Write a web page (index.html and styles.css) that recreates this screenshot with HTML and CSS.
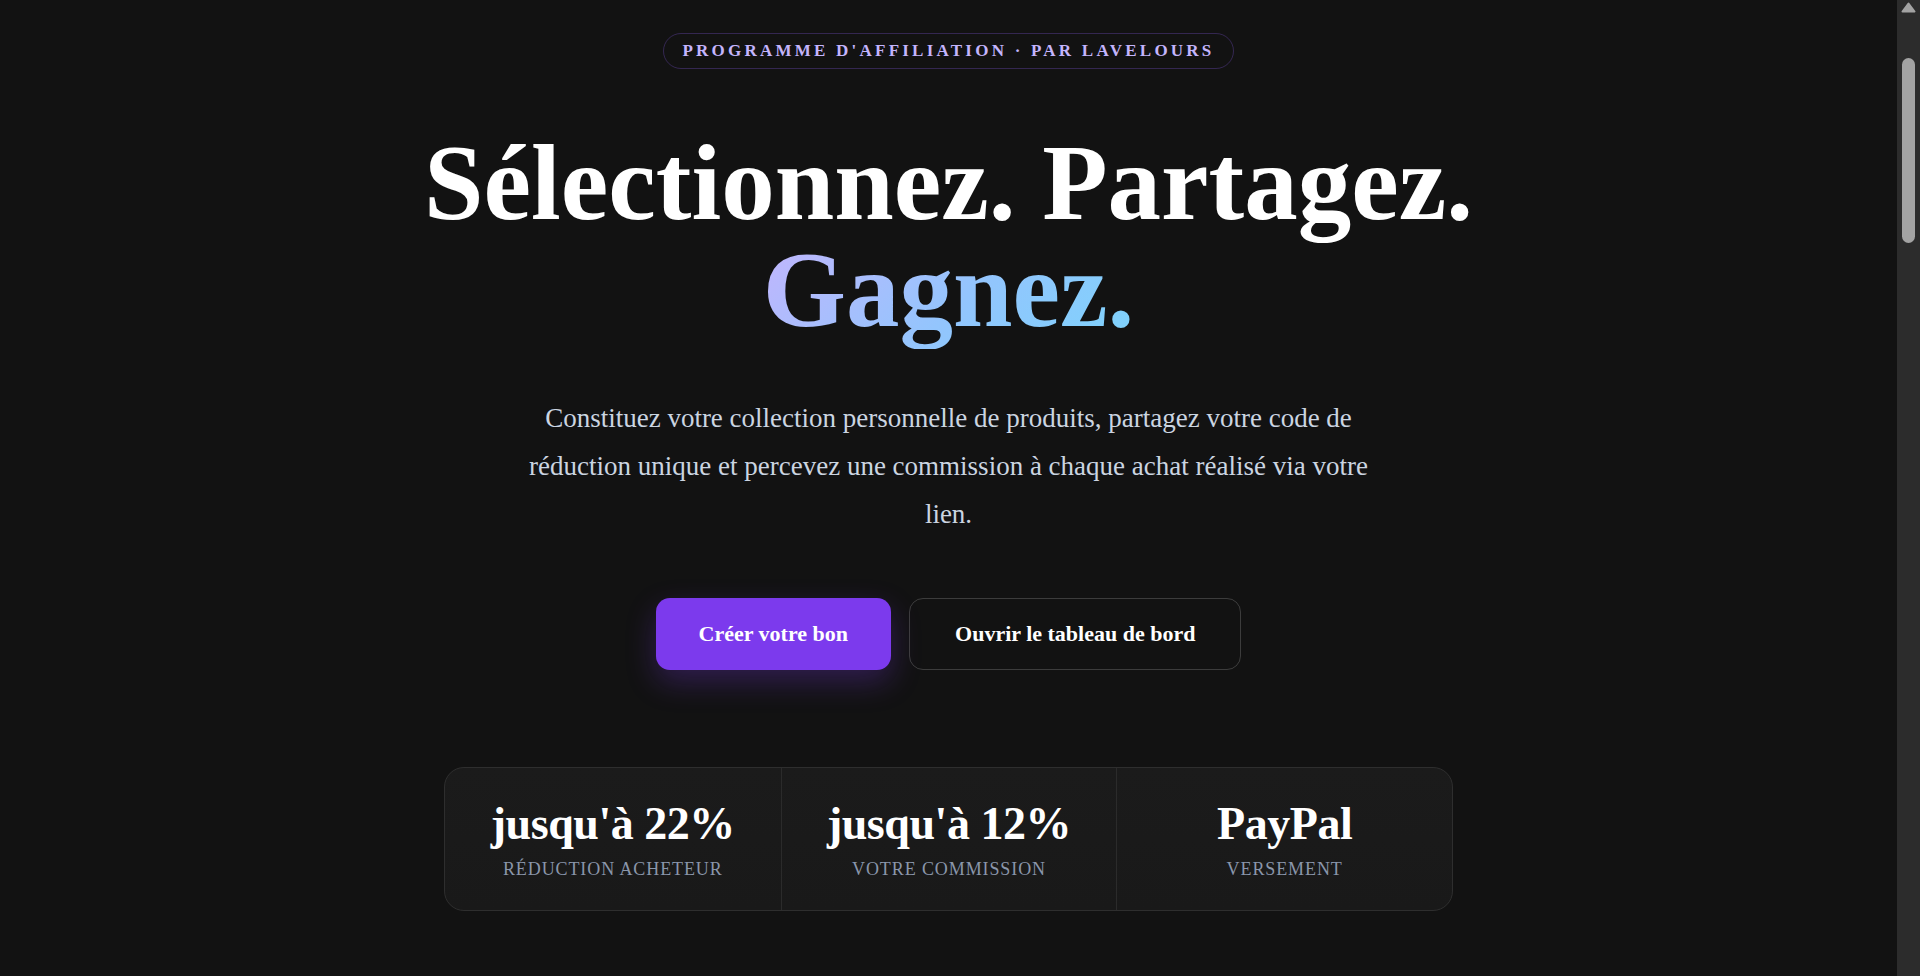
FILE: index.html
```html
<!DOCTYPE html>
<html lang="fr">
<head>
<meta charset="utf-8">
<title>Programme d'affiliation · Lavelours</title>
<link rel="stylesheet" href="styles.css">
</head>
<body>
<main class="page">
  <section class="hero">
    <div class="badge">Programme d'affiliation · par Lavelours</div>
    <h1 class="title">Sélectionnez. Partagez.<br><span class="title-accent">Gagnez.</span></h1>
    <p class="lead">Constituez votre collection personnelle de produits, partagez votre code de réduction unique et percevez une commission à chaque achat réalisé via votre lien.</p>
    <div class="actions">
      <a class="btn btn-primary" href="#">Créer votre bon</a>
      <a class="btn btn-outline" href="#">Ouvrir le tableau de bord</a>
    </div>
    <div class="stats">
      <div class="stat">
        <div class="stat-value">jusqu'à 22%</div>
        <div class="stat-label">Réduction acheteur</div>
      </div>
      <div class="stat">
        <div class="stat-value">jusqu'à 12%</div>
        <div class="stat-label">Votre commission</div>
      </div>
      <div class="stat">
        <div class="stat-value">PayPal</div>
        <div class="stat-label">Versement</div>
      </div>
    </div>
  </section>
</main>
<div class="scrollbar" aria-hidden="true">
  <svg class="scroll-arrow" width="15" height="11" viewBox="0 0 15 11"><path d="M7.5 1.5 L13.5 9.5 L1.5 9.5 Z" fill="#a3a3a3" stroke="#a3a3a3" stroke-width="2" stroke-linejoin="round"/></svg>
  <div class="scroll-thumb"></div>
</div>
</body>
</html>
```
FILE: styles.css
```css
html {
  color-scheme: dark;
  background: #121212;
  scrollbar-width: none;
}

body {
  margin: 0;
  background: #121212;
  color: #ffffff;
  font-family: "Liberation Serif", "Times New Roman", serif;
}

.page {
  margin-right: 23px;
  padding-bottom: 200px;
}

.hero {
  display: flex;
  flex-direction: column;
  align-items: center;
  text-align: center;
  padding-top: 33px;
}

.badge {
  padding: 7px 18px;
  border: 1px solid rgba(139, 92, 246, 0.28);
  border-radius: 999px;
  color: #c4b5fd;
  font-size: 17px;
  font-weight: 700;
  letter-spacing: 0.19em;
  text-transform: uppercase;
  line-height: 20px;
}

.title {
  margin: 61px 0 0;
  font-size: 107px;
  line-height: 107px;
  font-weight: 700;
  color: #ffffff;
}

.title-accent {
  background: linear-gradient(135deg, #c4b5fd 0%, #93c5fd 55%, #7dd3fc 100%);
  -webkit-background-clip: text;
  background-clip: text;
  color: transparent;
}

.lead {
  margin: 50px 0 0;
  max-width: 860px;
  font-size: 27px;
  line-height: 48px;
  color: #cbd5e1;
}

.actions {
  display: flex;
  gap: 18px;
  margin-top: 60px;
}

.btn {
  display: inline-block;
  padding: 22px 42px;
  border: 1px solid transparent;
  border-radius: 14px;
  font-size: 22px;
  line-height: 26px;
  font-weight: 700;
  text-decoration: none;
  color: #ffffff;
}

.btn-primary {
  background: #7c3aed;
  box-shadow: 0 12px 30px rgba(124, 58, 237, 0.28);
}

.btn-outline {
  padding-left: 45px;
  padding-right: 45px;
  border-color: rgba(255, 255, 255, 0.18);
  background: transparent;
}

.stats {
  display: grid;
  grid-template-columns: repeat(3, 1fr);
  width: 1007px;
  margin-top: 97px;
  border: 1px solid #2e2e2e;
  border-radius: 20px;
  background: linear-gradient(180deg, #1b1b1b, #191919);
  overflow: hidden;
}

.stat {
  padding: 30px 20px 28px;
}

.stat + .stat {
  border-left: 1px solid #2b2b2b;
}

.stat-value {
  font-size: 46px;
  line-height: 51px;
  font-weight: 700;
  letter-spacing: -0.01em;
  color: #ffffff;
}

.stat-label {
  margin-top: 8px;
  font-size: 18px;
  line-height: 25px;
  letter-spacing: 0.05em;
  text-transform: uppercase;
  color: #8a96ab;
}

/* browser scrollbar, as shown in the capture */
.scrollbar {
  position: fixed;
  top: 0;
  right: 0;
  width: 23px;
  height: 100vh;
  background: #2c2c2c;
}

.scroll-arrow {
  position: absolute;
  top: 2px;
  left: 4px;
}

.scroll-thumb {
  position: absolute;
  top: 58px;
  left: 5px;
  width: 13px;
  height: 185px;
  border-radius: 7px;
  background: #a3a3a3;
}
```
